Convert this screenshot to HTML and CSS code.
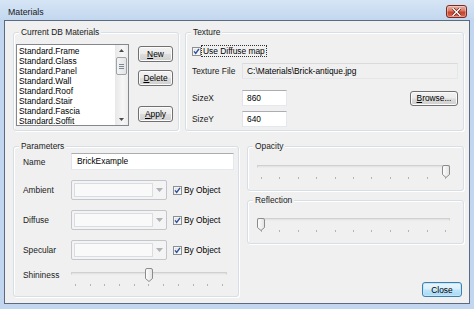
FILE: index.html
```html
<!DOCTYPE html>
<html>
<head>
<meta charset="utf-8">
<title>Materials</title>
<link rel="stylesheet" href="styles.css">
</head>
<body>
<div class="window">
  <div class="titlebar">
    <span class="title">Materials</span>
    <button class="title-close" aria-label="Close">
      <svg width="9" height="8" viewBox="0 0 9 8"><path d="M1 0.5 L8 7.5 M8 0.5 L1 7.5" stroke="#5a1a10" stroke-width="2.6" stroke-linecap="square"/><path d="M1 0.5 L8 7.5 M8 0.5 L1 7.5" stroke="#ffffff" stroke-width="1.4" stroke-linecap="square"/></svg>
    </button>
  </div>
  <div class="client">
    <div class="top-row">
      <fieldset class="group group-db">
        <legend>Current DB Materials</legend>
        <div class="db-body">
          <div class="listbox">
            <ul class="items">
              <li>Standard.Frame</li>
              <li>Standard.Glass</li>
              <li>Standard.Panel</li>
              <li>Standard.Wall</li>
              <li>Standard.Roof</li>
              <li>Standard.Stair</li>
              <li>Standard.Fascia</li>
              <li>Standard.Soffit</li>
            </ul>
            <div class="vscroll">
              <div class="sb-arrow"><svg width="5" height="3" viewBox="0 0 5 3"><path d="M0 3 L2.5 0 L5 3 Z" fill="#4a4a4a"/></svg></div>
              <div class="sb-track">
                <div class="sb-thumb"><span></span><span></span><span></span></div>
              </div>
              <div class="sb-arrow"><svg width="5" height="3" viewBox="0 0 5 3"><path d="M0 0 L2.5 3 L5 0 Z" fill="#4a4a4a"/></svg></div>
            </div>
          </div>
          <div class="db-buttons">
            <button class="btn"><u>N</u>ew</button>
            <button class="btn"><u>D</u>elete</button>
            <button class="btn btn-apply"><u>A</u>pply</button>
          </div>
        </div>
      </fieldset>
      <fieldset class="group group-texture">
        <legend>Texture</legend>
        <div class="tex-body">
          <div class="check-row">
            <span class="checkbox"><svg width="9" height="9" viewBox="0 0 9 9"><path d="M2 4.4 L3.7 6.4 L7 1.8" fill="none" stroke="#2a4f9a" stroke-width="1.4"/></svg></span>
            <span class="check-label focused">Use Diffuse map</span>
          </div>
          <div class="form-row file-row">
            <span class="lbl">Texture File</span>
            <div class="textbox readonly">C:\Materials\Brick-antique.jpg</div>
          </div>
          <div class="form-row size-row first">
            <span class="lbl">SizeX</span>
            <div class="textbox size">860</div>
            <button class="btn btn-browse"><u>B</u>rowse...</button>
          </div>
          <div class="form-row size-row">
            <span class="lbl">SizeY</span>
            <div class="textbox size">640</div>
          </div>
        </div>
      </fieldset>
    </div>
    <div class="bottom-row">
      <fieldset class="group group-params">
        <legend>Parameters</legend>
        <div class="params-body">
          <div class="p-row name-row">
            <span class="plbl">Name</span>
            <div class="textbox name">BrickExample</div>
          </div>
          <div class="p-row combo-row">
            <span class="plbl">Ambient</span>
            <div class="combo"><div class="combo-field"></div><div class="combo-arrow"><svg width="7" height="4" viewBox="0 0 7 4"><path d="M0 0 L3.5 4 L7 0 Z" fill="#aeb2b6"/></svg></div></div>
            <span class="checkbox"><svg width="9" height="9" viewBox="0 0 9 9"><path d="M2 4.4 L3.7 6.4 L7 1.8" fill="none" stroke="#2a4f9a" stroke-width="1.4"/></svg></span>
            <span class="check-label">By Object</span>
          </div>
          <div class="p-row combo-row">
            <span class="plbl">Diffuse</span>
            <div class="combo"><div class="combo-field"></div><div class="combo-arrow"><svg width="7" height="4" viewBox="0 0 7 4"><path d="M0 0 L3.5 4 L7 0 Z" fill="#aeb2b6"/></svg></div></div>
            <span class="checkbox"><svg width="9" height="9" viewBox="0 0 9 9"><path d="M2 4.4 L3.7 6.4 L7 1.8" fill="none" stroke="#2a4f9a" stroke-width="1.4"/></svg></span>
            <span class="check-label">By Object</span>
          </div>
          <div class="p-row combo-row">
            <span class="plbl">Specular</span>
            <div class="combo"><div class="combo-field"></div><div class="combo-arrow"><svg width="7" height="4" viewBox="0 0 7 4"><path d="M0 0 L3.5 4 L7 0 Z" fill="#aeb2b6"/></svg></div></div>
            <span class="checkbox"><svg width="9" height="9" viewBox="0 0 9 9"><path d="M2 4.4 L3.7 6.4 L7 1.8" fill="none" stroke="#2a4f9a" stroke-width="1.4"/></svg></span>
            <span class="check-label">By Object</span>
          </div>
          <div class="p-row shin-row">
            <span class="plbl">Shininess</span>
            <div class="slider slider-shin">
              <div class="track"></div>
              <div class="ticks"><i></i><i></i><i></i><i></i><i></i><i></i><i></i><i></i><i></i><i></i><i></i></div>
              <span class="thumb" style="left: calc(4px + (100% - 8px) * 0.5)"><svg width="8" height="14" viewBox="0 0 8 14"><defs><linearGradient id="tg1" x1="0" y1="0" x2="1" y2="0"><stop offset="0" stop-color="#ffffff"/><stop offset="1" stop-color="#e2e2e2"/></linearGradient></defs><path d="M0.5 2 Q0.5 0.5 2 0.5 H6 Q7.5 0.5 7.5 2 V10.5 L4 13.5 L0.5 10.5 Z" fill="url(#tg1)" stroke="#8b8b8b"/></svg></span>
            </div>
          </div>
        </div>
      </fieldset>
      <div class="right-col">
        <fieldset class="group group-opacity">
          <legend>Opacity</legend>
          <div class="slider-body">
            <div class="slider">
              <div class="track"></div>
              <div class="ticks"><i></i><i></i><i></i><i></i><i></i><i></i><i></i><i></i><i></i><i></i><i></i></div>
              <span class="thumb" style="left: calc(4px + (100% - 8px) * 1)"><svg width="8" height="13" viewBox="0 0 8 13"><defs><linearGradient id="tg2" x1="0" y1="0" x2="1" y2="0"><stop offset="0" stop-color="#ffffff"/><stop offset="1" stop-color="#e2e2e2"/></linearGradient></defs><path d="M0.5 2 Q0.5 0.5 2 0.5 H6 Q7.5 0.5 7.5 2 V9.5 L4 12.5 L0.5 9.5 Z" fill="url(#tg2)" stroke="#8b8b8b"/></svg></span>
            </div>
          </div>
        </fieldset>
        <fieldset class="group group-reflection">
          <legend>Reflection</legend>
          <div class="slider-body refl">
            <div class="slider">
              <div class="track"></div>
              <div class="ticks"><i></i><i></i><i></i><i></i><i></i><i></i><i></i><i></i><i></i><i></i><i></i></div>
              <span class="thumb" style="left: calc(4px + (100% - 8px) * 0)"><svg width="8" height="13" viewBox="0 0 8 13"><defs><linearGradient id="tg3" x1="0" y1="0" x2="1" y2="0"><stop offset="0" stop-color="#ffffff"/><stop offset="1" stop-color="#e2e2e2"/></linearGradient></defs><path d="M0.5 2 Q0.5 0.5 2 0.5 H6 Q7.5 0.5 7.5 2 V9.5 L4 12.5 L0.5 9.5 Z" fill="url(#tg3)" stroke="#8b8b8b"/></svg></span>
            </div>
          </div>
        </fieldset>
        <div class="footer">
          <button class="btn btn-default">Close</button>
        </div>
      </div>
    </div>
  </div>
</div>
</body>
</html>
```

FILE: styles.css
```css
* { box-sizing: border-box; }
html, body { margin: 0; padding: 0; }
body {
  width: 474px;
  height: 309px;
  overflow: hidden;
  font-family: "Liberation Sans", Arial, sans-serif;
  font-size: 8.4px;
  font-weight: normal;
  color: #000;
  background: #c4d8ef;
}
.window {
  width: 474px;
  height: 309px;
  display: flex;
  flex-direction: column;
  padding: 0 4px 5px 4px;
  background: linear-gradient(#d6e5f5 0px, #c2d7ef 20px, #c2d7ef 100%);
}
.titlebar {
  height: 20px;
  display: flex;
  align-items: center;
  justify-content: space-between;
  padding: 3px 0 0 4px;
}
.title { font-size: 8.8px; color: #1a1a1a; }
.title-close {
  width: 21px;
  height: 13px;
  margin-right: 3px;
  padding: 0;
  border: 1px solid #7a2a1e;
  border-radius: 3px;
  background: linear-gradient(#eab0a3 0%, #d87a66 45%, #c4432c 55%, #d9694f 100%);
  box-shadow: inset 0 0 0 1px rgba(255,255,255,0.35);
  display: flex;
  align-items: center;
  justify-content: center;
}
.client {
  flex: 1;
  border: 1px solid #5a6a80;
  background: #f0f0f0;
  padding: 6px 5px 6px 8px;
  display: flex;
  flex-direction: column;
  gap: 10px;
}
.top-row {
  display: grid;
  grid-template-columns: 166px 279px;
  column-gap: 6px;
  height: 104px;
}
.bottom-row {
  display: grid;
  grid-template-columns: 226px 217px;
  column-gap: 8px;
  height: 156px;
}
.group {
  margin: 0;
  padding: 0;
  min-width: 0;
  border: 1px solid #d5dfe5;
  border-radius: 3px;
  box-shadow: inset 1px 1px 0 #ffffff, 1px 1px 0 #ffffff;
}
.group > legend {
  padding: 0 2px;
  margin-left: 5px;
  line-height: 10px;
  height: 10px;
  font-weight: 400;
  background: #f0f0f0;
  color: #1a1a1a;
}

/* Current DB Materials */
.db-body {
  display: flex;
  gap: 9px;
  padding: 7px 0 0 2px;
}
.listbox {
  width: 113px;
  height: 82px;
  border: 1px solid #828790;
  background: #fff;
  display: flex;
}
.items {
  flex: 1;
  margin: 0;
  padding: 1px 0 0 2px;
  list-style: none;
  line-height: 10px;
}
.vscroll {
  width: 13px;
  display: flex;
  flex-direction: column;
  background: linear-gradient(90deg, #e8e8e8, #f6f6f6 60%, #ececec);
}
.sb-arrow {
  height: 11px;
  display: flex;
  align-items: center;
  justify-content: center;
}
.sb-track { flex: 1; padding-top: 1px; }
.sb-thumb {
  margin: 0 1px;
  height: 18px;
  border: 1px solid #9da3ab;
  border-radius: 2px;
  background: linear-gradient(90deg, #f4f4f4, #e4e4e4);
  display: flex;
  flex-direction: column;
  align-items: center;
  justify-content: center;
  gap: 1px;
}
.sb-thumb span {
  width: 5px;
  height: 1px;
  background: #7c8894;
}
.db-buttons {
  display: flex;
  flex-direction: column;
  gap: 8px;
  padding: 2px 0 4px;
}
.btn-apply { margin-top: auto; }

.btn {
  font: inherit;
  color: #000;
  width: 35px;
  height: 16px;
  padding: 0;
  line-height: 13px;
  border: 1px solid #707070;
  border-radius: 3px;
  background: linear-gradient(#f2f2f2 0%, #ebebeb 48%, #dddddd 52%, #cfcfcf 100%);
  box-shadow: inset 0 0 0 1px #fbfbfb;
  text-align: center;
}

/* Texture */
.tex-body {
  display: flex;
  flex-direction: column;
  padding: 9px 5px 0 6px;
}
.check-row {
  display: flex;
  align-items: center;
  height: 10px;
}
.checkbox {
  width: 9px;
  height: 9px;
  flex: none;
  border: 1px solid #8e8f8f;
  background: linear-gradient(135deg, #dcdcdc, #ffffff);
  box-shadow: inset 0 0 0 1px #f4f4f4;
  display: flex;
  align-items: center;
  justify-content: center;
}
.checkbox svg { margin: -1px; }
.check-label { margin-left: 2px; line-height: 10px; }
.check-label.focused {
  outline: 1px dotted #333;
  outline-offset: 0;
  padding: 0 1px;
  margin-left: 1px;
}
.form-row {
  display: grid;
  grid-template-columns: 50px 1fr;
  align-items: center;
  height: 16px;
}
.file-row { margin-top: 7px; }
.size-row { grid-template-columns: 50px 45px 1fr; margin-top: 5px; }
.size-row.first { margin-top: 11px; }
.lbl { line-height: 10px; color: #1a1a1a; }
.textbox {
  height: 16px;
  border: 1px solid #abadb3;
  border-color: #abadb3 #e3e9ef #e3e9ef #e2e3ea;
  background: #fff;
  padding: 0 4px;
  line-height: 14px;
  white-space: nowrap;
  overflow: hidden;
}
.textbox.readonly {
  background: #f0f0f0;
  border-color: #d8dadc #e4e6e8 #e4e6e8 #e0e2e4;
  padding-left: 4px;
}
.textbox.size { padding-left: 4px; }
.btn-browse {
  justify-self: end;
  width: 48px;
  height: 15px;
  line-height: 12px;
}

/* Parameters */
.params-body {
  display: flex;
  flex-direction: column;
  padding: 2px 4px 0 9px;
}
.p-row {
  display: flex;
  align-items: center;
}
.plbl { width: 48px; flex: none; line-height: 10px; color: #1a1a1a; }
.name-row { height: 17px; }
.textbox.name {
  flex: 1;
  height: 17px;
  line-height: 15px;
  padding-left: 5px;
}
.combo-row { height: 20px; margin-top: 10px; }
.combo {
  width: 96px;
  height: 20px;
  border: 1px solid #c3c6ca;
  border-radius: 2px;
  background: #f4f4f4;
  display: flex;
  padding: 2px 0 2px 2px;
  margin-right: 6px;
}
.combo-field {
  flex: 1;
  border: 1px solid #d9dce0;
  background: #f9f9f9;
}
.combo-arrow {
  width: 13px;
  display: flex;
  align-items: center;
  justify-content: center;
}
.shin-row { margin-top: 8px; align-items: flex-start; }
.shin-row .plbl { margin-top: 2px; }
.slider-shin { width: 156px; }

/* Sliders */
.slider {
  position: relative;
  height: 19px;
}
.track {
  margin-top: 4px;
  height: 3px;
  border: 1px solid #d0d0d0;
  border-bottom-color: #ececec;
  background: #e4e4e4;
  border-radius: 1px;
}
.ticks {
  display: flex;
  justify-content: space-between;
  margin: 9px 4px 0;
}
.ticks i {
  width: 1px;
  height: 2px;
  background: #b4b4b4;
}
.thumb {
  position: absolute;
  top: 0;
  width: 8px;
  height: 14px;
  margin-left: -4px;
}
.thumb svg { display: block; }
.right-col {
  display: flex;
  flex-direction: column;
}
.group-opacity { height: 50px; }
.group-reflection { height: 49px; margin-top: 4px; }
.slider-body { padding: 10px 13px 0 9px; }
.slider-body.refl { padding-top: 9px; }
.footer {
  flex: 1;
  display: flex;
  justify-content: flex-end;
  align-items: flex-end;
  padding-right: 2px;
}
.btn-default {
  width: 40px;
  height: 15px;
  line-height: 12px;
  border-color: #3c7fb1;
  background: linear-gradient(#eaf6fd 0%, #d9f0fc 48%, #bee6fd 52%, #a7d9f5 100%);
  box-shadow: inset 0 0 0 1px #c4e5f6;
}
u { text-decoration: underline; text-underline-offset: 1px; }
```
